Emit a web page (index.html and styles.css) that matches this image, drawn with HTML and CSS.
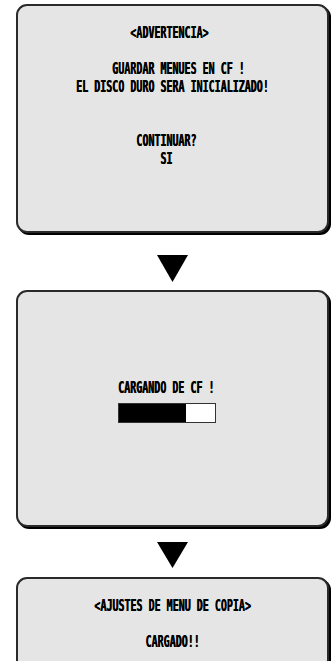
FILE: index.html
```html
<html>

<head>
    <title>Copia de menus</title>
    <link rel="stylesheet" href="styles.css">
</head>

<body>
    <div class="page">
        <!-- warning screen -->
        <div class="screen warn">
            <div class="row">         &lt;ADVERTENCIA&gt;</div>
            <div class="row"> </div>
            <div class="row">      GUARDAR MENUES EN CF !</div>
            <div class="row">EL DISCO DURO SERA INICIALIZADO!</div>
            <div class="row"> </div>
            <div class="row"> </div>
            <div class="row">          CONTINUAR?</div>
            <div class="row">              SI</div>
        </div>

        <svg class="arrow" width="31" height="27" viewBox="0 0 31 27">
            <polygon points="0,0 31,0 15.5,27" fill="#000"/>
        </svg>

        <!-- loading screen -->
        <div class="screen load">
            <div class="row">CARGANDO DE CF !</div>
            <div class="bar">
                <div class="fill" style="width: 67px;"></div>
            </div>
        </div>

        <svg class="arrow arrow2" width="31" height="26" viewBox="0 0 31 26">
            <polygon points="0,0 31,0 15.5,26" fill="#000"/>
        </svg>

        <!-- done screen -->
        <div class="screen done">
            <div class="row">&lt;AJUSTES DE MENU DE COPIA&gt;</div>
            <div class="row"> </div>
            <div class="row">CARGADO!!</div>
        </div>
    </div>
</body>

</html>
```

FILE: styles.css
```css
body {
  margin: 0;
  background-color: #fff;
  overflow: hidden;
}

.page {
  display: flex;
  flex-direction: column;
  width: 313px;
  padding-left: 16px;
  padding-top: 4px;
}

/* The monitor screens */
.screen {
  box-sizing: border-box;
  background-color: #e5e5e5;
  border: 2px solid #2a2a2a;
  border-radius: 11px;
  box-shadow: 2px 2px 0 #000;
  color: #000;
  font-family: "DejaVu Sans Mono", "Liberation Mono", monospace;
  font-weight: bold;
  font-size: 10px;
}

/* one text line of the OSD grid */
.row {
  height: 18px;
  line-height: 18px;
  white-space: pre;
  transform: scaleY(1.5);
  text-shadow: 0.4px 0 0 #000;
}

.warn {
  height: 229px;
  padding: 18px 0 0 58px;
}

.load {
  height: 237px;
  margin-top: 8px;
  padding: 87px 0 0 100px;
}

.done {
  height: 240px;
  margin-top: 9px;
  padding-top: 18px;
  text-align: center;
}

.arrow {
  display: block;
  align-self: center;
  margin-top: 22px;
}

.arrow2 {
  margin-top: 15px;
}

/* progress bar */
.bar {
  box-sizing: border-box;
  width: 98px;
  height: 20px;
  margin-top: 6px;
  border: 1px solid #333;
  background-color: #fff;
}

.fill {
  height: 100%;
  background-color: #000;
}
```
